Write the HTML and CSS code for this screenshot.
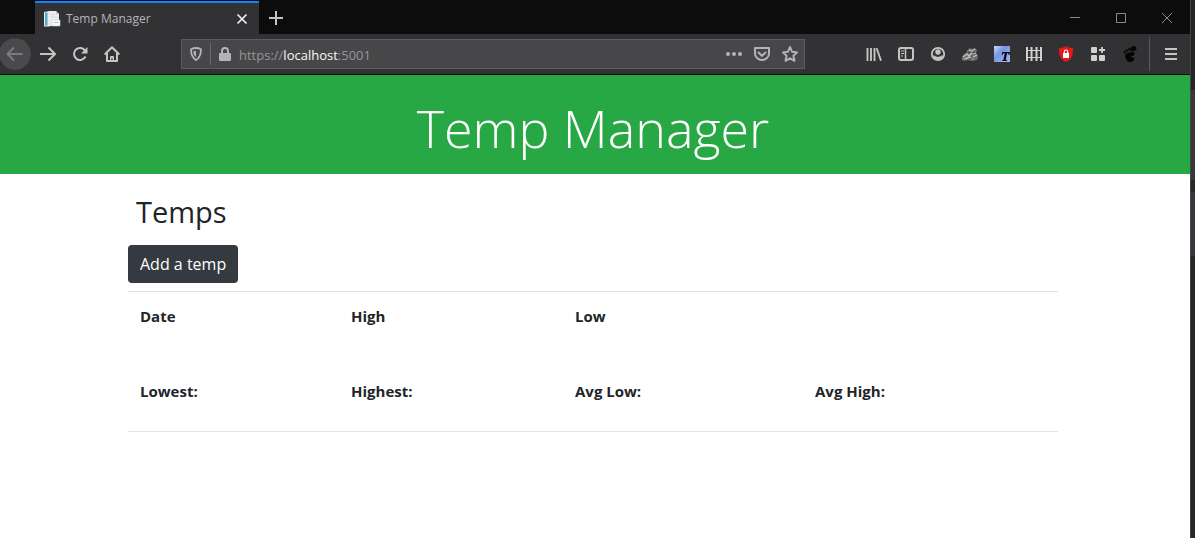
FILE: index.html
```html
<!DOCTYPE html>
<html lang="en">
<head>
<meta charset="utf-8">
<title>Temp Manager</title>
<link rel="stylesheet" href="styles.css">
</head>
<body>
<div class="window">
  <div class="tabbar">
    <div class="tab">
      <svg class="favicon" width="18" height="18" viewBox="0 0 18 18"><path d="M1 2l6-1v15.500H1z" fill="#dfeaf2"/><path d="M2 2.500h2.500v13H2z" fill="#5ba6cf"/><path d="M5.500 1H13l3 3v12H5.500z" fill="#e9edf0"/><path d="M13 1v3h3z" fill="#b9c4cc"/><path d="M7.500 4.500h4M7.500 7h7" stroke="#d3dbe0" fill="none"/><path d="M9 10h8v6H9z" fill="#f7f9fa" stroke="#cbd3d9" stroke-width=".6"/><path d="M11 12.500h4" stroke="#b5c0c8"/></svg>
      <span class="tab-title">Temp Manager</span>
      <button class="tab-close" aria-label="Close tab"><svg width="12" height="12" viewBox="0 0 12 12"><path d="M1.500 1.500l9 9M10.500 1.500l-9 9" stroke="#f0f0f1" stroke-width="1.700"/></svg></button>
    </div>
    <button class="new-tab" aria-label="New tab"><svg width="14" height="14" viewBox="0 0 14 14"><path d="M7 0v14M0 7h14" stroke="#c4c4c5" stroke-width="2"/></svg></button>
    <div class="window-controls">
      <button aria-label="Minimize"><svg width="10" height="10" viewBox="0 0 10 10"><path d="M0 4.500h10" stroke="#8a8a8a"/></svg></button>
      <button aria-label="Maximize"><svg width="10" height="10" viewBox="0 0 10 10"><path d="M.5.5h9v9h-9z" fill="none" stroke="#8a8a8a"/></svg></button>
      <button aria-label="Close"><svg width="10" height="10" viewBox="0 0 10 10"><path d="M0 0l10 10M10 0L0 10" stroke="#8a8a8a"/></svg></button>
    </div>
  </div>
  <div class="toolbar">
    <button class="tool" aria-label="Back" disabled><svg width="32" height="32" viewBox="0 0 32 32"><circle cx="15" cy="16" r="15.800" fill="#4a4a4c"/><path d="M22.500 16H8M14 9.500L7.500 16l6.500 6.500" fill="none" stroke="#7c7c7e" stroke-width="2"/></svg></button>
    <button class="tool" aria-label="Forward"><svg width="16" height="16" viewBox="0 0 16 16"><path d="M0 8h15M8.500 1.500L15 8l-6.500 6.500" fill="none" stroke="#c4c4c5" stroke-width="2"/></svg></button>
    <button class="tool" aria-label="Reload"><svg width="16" height="16" viewBox="0 0 16 16"><path d="M13.200 5A6 6 0 1 0 13.500 10.500" fill="none" stroke="#c4c4c5" stroke-width="2"/><path d="M15.500 1v6.500H9z" fill="#c4c4c5"/></svg></button>
    <button class="tool" aria-label="Home"><svg width="16" height="16" viewBox="0 0 16 16"><path d="M.7 8.500L8 1.300l7.300 7.200M3 7v8h10V7" fill="none" stroke="#c4c4c5" stroke-width="2" stroke-linejoin="round"/><path d="M6 15v-4a1 1 0 0 1 1-1h2a1 1 0 0 1 1 1v4H8.700v-2.500H7.300V15z" fill="#c4c4c5"/></svg></button>
    <div class="urlbar">
      <button class="url-icon" aria-label="Tracking protection"><svg width="14" height="14" viewBox="0 0 14 14"><path d="M7 1c2 0 3.500.5 5 1.200 0 5-.8 8.300-5 10.800-4.200-2.500-5-5.800-5-10.800C3.500 1.500 5 1 7 1z" fill="none" stroke="#b4b4b6" stroke-width="1.800" stroke-linejoin="round"/><path d="M7 3.700v6.500C5 8.500 4.500 7 4.400 4.200z" fill="#b4b4b6"/></svg></button>
      <span class="url-rule"></span>
      <button class="url-icon" aria-label="Site information"><svg width="14" height="16" viewBox="0 0 14 16"><rect x="1" y="7" width="12" height="8" rx="1" fill="#b4b4b6"/><path d="M4 8V5a3 3 0 0 1 6 0v3" fill="none" stroke="#b4b4b6" stroke-width="2"/></svg></button>
      <div class="url-text" role="textbox" aria-label="Address" contenteditable="true" spellcheck="false">https://<span class="host">localhost</span>:5001</div>
      <button class="action" aria-label="Page actions"><svg width="16" height="16" viewBox="0 0 16 16"><g fill="#b4b4b6"><circle cx="2" cy="8" r="2"/><circle cx="8" cy="8" r="2"/><circle cx="14" cy="8" r="2"/></g></svg></button>
      <button class="action" aria-label="Save to Pocket"><svg width="16" height="16" viewBox="0 0 16 16"><path d="M1 2h14v5.500a7 6.500 0 0 1-14 0z" fill="none" stroke="#b4b4b6" stroke-width="2" stroke-linejoin="round"/><path d="M4.500 6.500L8 9.800l3.500-3.300" fill="none" stroke="#b4b4b6" stroke-width="2" stroke-linecap="round"/></svg></button>
      <button class="action" aria-label="Bookmark"><svg width="16" height="16" viewBox="0 0 16 16"><path d="M8 1l2.100 4.800 5 .6-3.700 3.400 1.100 5L8 12.300l-4.500 2.500 1.100-5L.9 6.400l5-.6z" fill="none" stroke="#b4b4b6" stroke-width="1.900" stroke-linejoin="round"/></svg></button>
    </div>
    <button class="tool" aria-label="Library"><svg width="16" height="16" viewBox="0 0 16 16"><path d="M1.500 2v13M5 2v13M8.500 2v13M10.700 2.300l4.300 12.400" stroke="#c4c4c5" stroke-width="1.900"/></svg></button>
    <button class="tool" aria-label="Sidebar"><svg width="16" height="16" viewBox="0 0 16 16"><rect x="1" y="2" width="14" height="12" rx="2" fill="none" stroke="#c4c4c5" stroke-width="2"/><path d="M7.500 2v12" stroke="#c4c4c5" stroke-width="1.500"/><path d="M3 5h3M3 7.500h3M3 10h2" stroke="#c4c4c5"/></svg></button>
    <button class="tool" aria-label="Account"><svg width="16" height="16" viewBox="0 0 16 16"><circle cx="8" cy="8" r="6.200" fill="none" stroke="#c4c4c5" stroke-width="1.800"/><circle cx="8" cy="6" r="2.700" fill="#c4c4c5"/><path d="M3 9.500h1.500c1.500 1.800 5.500 1.800 7 0H13l-1 3L8 14l-4-1.500z" fill="#c4c4c5"/></svg></button>
    <button class="tool" aria-label="Privacy Badger"><svg width="18" height="16" viewBox="0 0 18 16"><path d="M1 11l2-3 2-1 2-4 3-1 1 1 3-1 2 2-1 3 2 3-1 4-5 1-4-1-4 1-2-1z" fill="#6e6e6f"/><path d="M2 11l4-3 2 2 3-3M8 4l3 1 3-2M5 13l3-2 4 2M12 8l3-1M12 11l4-2M3 13l3-1" fill="none" stroke="#c6c6c6" stroke-width="1.100"/><path d="M7 7l2-1M12 6l2 1M9 13l3-2" stroke="#38383a"/></svg></button>
    <button class="tool" aria-label="Text extension"><svg width="16" height="16" viewBox="0 0 16 16"><defs><linearGradient id="blue" x1="0" y1="0" x2="1" y2="1"><stop stop-color="#c8d8f8"/><stop offset=".4" stop-color="#7896e0"/><stop offset="1" stop-color="#a8b9ed"/></linearGradient></defs><rect width="16" height="16" fill="url(#blue)"/><path d="M8.500 6H16l-.5 3h-.8c0-1.300-.4-2-1.600-2l-1.200 6.300c0 .8.400 1 1.300 1v.7H8v-.7c1 0 1.400-.3 1.600-1L10.800 7C9.500 7 9 7.700 8.500 9h-.8z" fill="#080a18"/></svg></button>
    <button class="tool" aria-label="Containers"><svg width="16" height="16" viewBox="0 0 16 16"><path d="M1 1v14M5.500 1v14M10.500 1v14M15 1v14" stroke="#d0d0d1" stroke-width="2"/><path d="M0 4.500h16M0 11.500h16" stroke="#d0d0d1"/></svg></button>
    <button class="tool" aria-label="Shield"><svg width="16" height="16" viewBox="0 0 16 16"><path d="M8 0c2 1.500 4.500 2 7 2 .2 6-.5 11-7 14C1.500 13 .8 8 1 2c2.500 0 5-.5 7-2z" fill="#e51818"/><rect x="5" y="7" width="6" height="5" fill="#fff"/><path d="M6.300 7V5.700a1.700 1.700 0 0 1 3.400 0V7" fill="none" stroke="#fff" stroke-width="1.200"/></svg></button>
    <button class="tool" aria-label="Add-ons"><svg width="16" height="16" viewBox="0 0 16 16"><g fill="#d0d0d1"><rect x="1" y="1" width="6" height="6" rx="1"/><rect x="1" y="9" width="6" height="6" rx="1"/><rect x="9" y="9" width="6" height="6" rx="1"/></g><path d="M12 1v6M9 4h6" stroke="#d0d0d1" stroke-width="1.800"/></svg></button>
    <button class="tool" aria-label="GNOME"><svg width="16" height="16" viewBox="0 0 16 16"><g fill="#050505"><ellipse cx="11.500" cy="2.700" rx="3" ry="2.400" transform="rotate(-30 11.500 2.700)"/><ellipse cx="7.500" cy="3.300" rx="1.200" ry="1.700"/><ellipse cx="4.800" cy="4.600" rx="1.100" ry="1.500"/><ellipse cx="2.600" cy="6.400" rx="1" ry="1.300"/><path d="M3.500 8.500C5.500 5.500 13.300 5 12.800 8c-.3 2-3.200 1.500-3.500 3 0 1.200 1.500.9 2.200.2l1 .8C11.500 17.200 5.500 17 4.300 13.500 3.800 12 2.500 10 3.500 8.500z"/></g></svg></button>
    <span class="tool-rule"></span>
    <button class="tool" aria-label="Menu"><svg width="12" height="12" viewBox="0 0 12 12"><path d="M0 1h12M0 6h12M0 11h12" stroke="#c4c4c5" stroke-width="2"/></svg></button>
  </div>
  <div class="page">
    <header class="banner"><h1>Temp Manager</h1></header>
    <main class="container">
      <h2>Temps</h2>
      <button class="btn">Add a temp</button>
      <table class="temps">
        <colgroup><col class="c1"><col class="c2"><col class="c3"><col></colgroup>
        <thead><tr><th>Date</th><th>High</th><th>Low</th><th></th></tr></thead>
        <tbody><tr><th>Lowest:</th><th>Highest:</th><th>Avg Low:</th><th>Avg High:</th></tr></tbody>
      </table>
      <hr>
    </main>
  </div>
</div>
<div class="desktop-edge"></div>
</body>
</html>
```

FILE: styles.css
```css
* { box-sizing: border-box; }
body {
  margin: 0;
  min-height: 100vh;
  display: flex;
  background: #fff;
  color: #212529;
  font: 16px/24px "Segoe UI", "Open Sans", "Noto Sans", sans-serif;
}
button {
  font: inherit;
  border: 0;
  padding: 0;
  background: none;
  display: flex;
  align-items: center;
  justify-content: center;
}
svg { display: block; flex: none; }
.window { flex: 1; min-width: 0; }
.desktop-edge {
  width: 5px;
  border-left: 1px solid #454547;
  background: linear-gradient(#242426 90px, #38373d 90px 180px, #28282a 180px 192px, #38373d 192px 256px, #262828 256px);
}
.tabbar {
  display: flex;
  height: 34px;
  padding: 1px 0 0 35px;
  background: #0c0c0d;
}
.tab {
  display: flex;
  align-items: center;
  width: 224px;
  padding: 0 11px 0 8px;
  border-top: 2px solid #0a84ff;
  background: #323234;
}
.tab-title {
  flex: 1;
  margin-left: 5px;
  color: #b4b4b6;
  font-size: 12px;
  line-height: 16px;
}
.new-tab { width: 34px; }
.window-controls { display: flex; margin-left: auto; }
.window-controls button { width: 46px; }
.toolbar {
  display: flex;
  align-items: center;
  height: 41px;
  padding-right: 3px;
  border-bottom: 1px solid #0c0c0d;
  background: #323234;
}
.tool { width: 32px; height: 32px; flex: none; }
.tool-rule { width: 1px; height: 34px; margin: 0 5px 0 3px; background: #5a5a5c; }
.urlbar {
  display: flex;
  align-items: center;
  flex: 1;
  min-width: 0;
  height: 30px;
  margin: 0 53px;
  border: 1px solid #5c5c5e;
  background: #474749;
}
.url-icon { width: 28px; height: 28px; }
.url-rule { width: 1px; height: 22px; background: #626b76; }
.url-text {
  flex: 1;
  padding-top: 1px;
  color: #96969a;
  font-size: 13px;
  line-height: 20px;
  white-space: nowrap;
}
.host { color: #f9f9fa; }
.action { width: 28px; height: 28px; }
.banner {
  padding: 19px 4px 12px 0;
  background: #28a745;
  color: #fff;
  text-align: center;
}
.banner h1 { margin: 0; font-size: 52px; line-height: 68px; font-weight: 300; }
.container { max-width: 964px; margin: 0 auto; padding: 18px 19px 0 15px; }
.container h2 { margin: 0 8px 14px; font-size: 29px; line-height: 39px; font-weight: 400; }
.btn {
  height: 38px;
  padding: 0 12px;
  border-radius: 4px;
  background: #343a40;
  color: #fff;
}
.temps {
  width: 100%;
  margin-top: 8px;
  border-collapse: separate;
  border-spacing: 0;
  border-top: 1px solid #dee2e6;
  table-layout: fixed;
}
.c1 { width: 211px; }
.c2 { width: 224px; }
.c3 { width: 240px; }
.temps th { padding: 12px; text-align: left; font-weight: 700; font-size: 15px; }
.temps tbody th { padding-top: 39px; }
hr { margin: 16px 0 0; border: 0; border-top: 1px solid #e0e2e4; }
```
